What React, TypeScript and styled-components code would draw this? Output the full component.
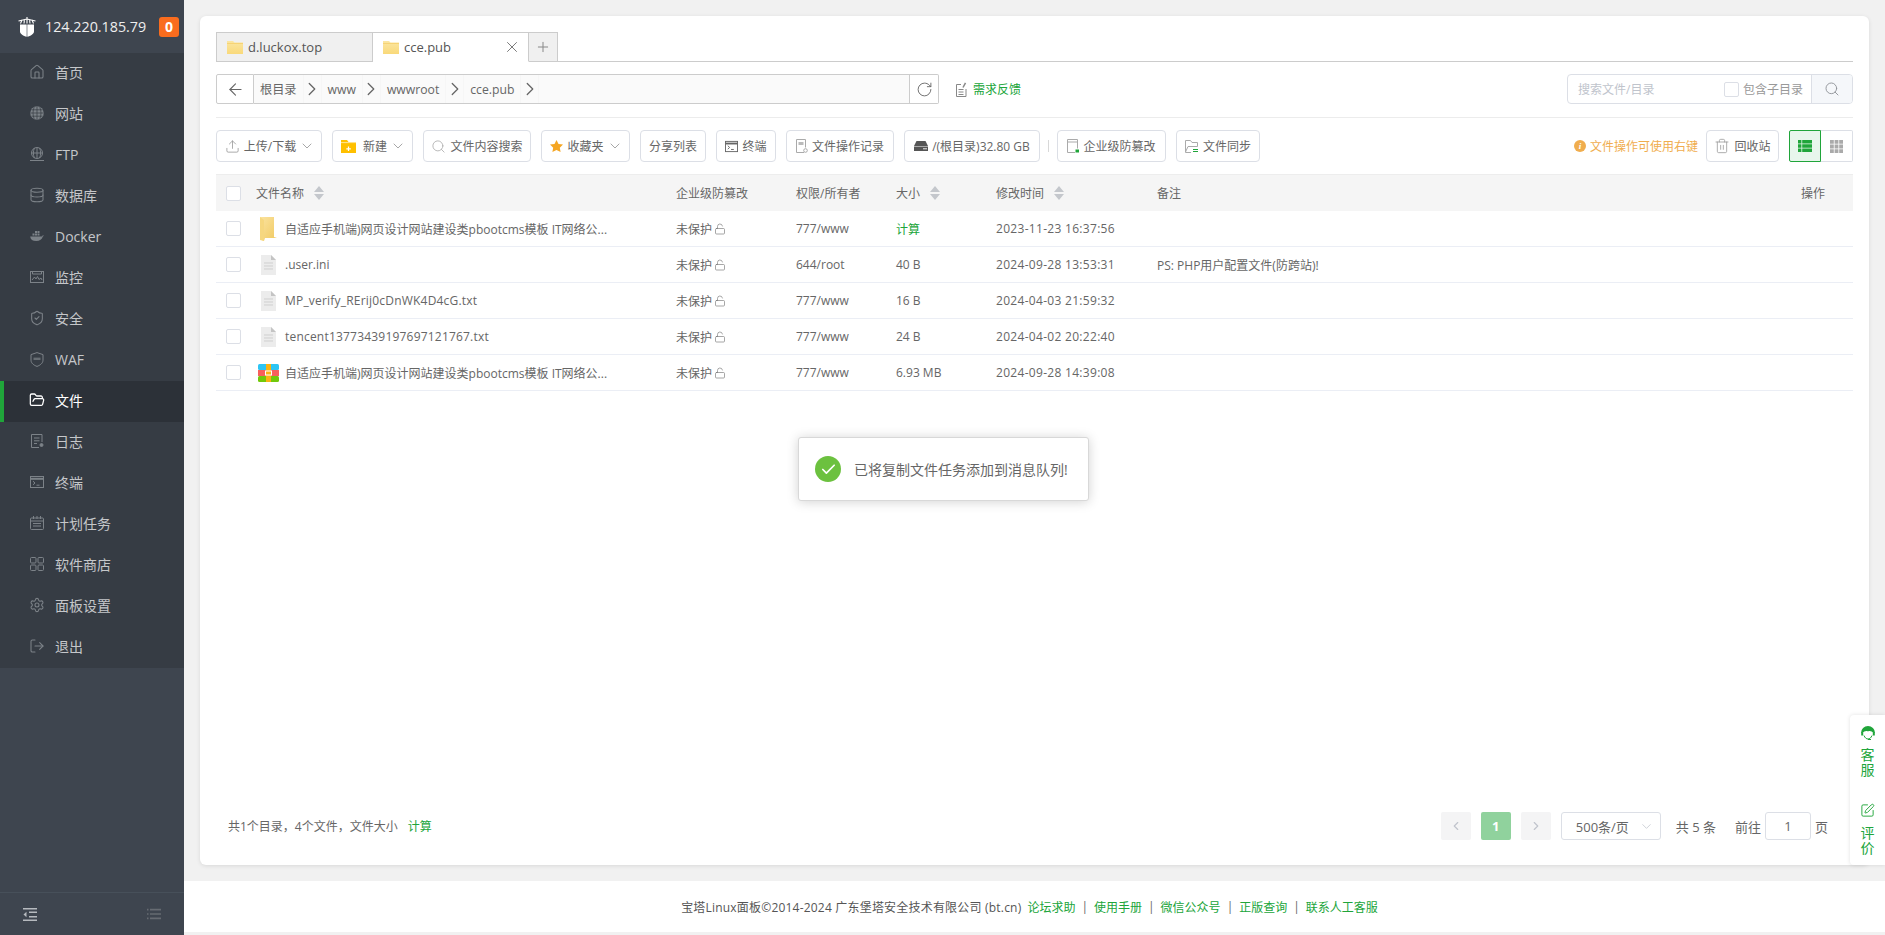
import React from "react";
import styled, { createGlobalStyle } from "styled-components";
import {
  ArrowLeft,
  Check,
  ChevronDown,
  ChevronLeft,
  ChevronRight,
  Database,
  FolderOpen,
  House,
  LockOpen,
  LogOut,
  Plus,
  RotateCw,
  Search,
  Settings,
  ShieldCheck,
  SquarePen,
  Trash2,
  Upload,
  X,
} from "lucide-react";

const GREEN = "#20a53a";
const FONT = `"Open Sans", "Noto Sans CJK SC", sans-serif`;

const GlobalStyle = createGlobalStyle`
  html, body { margin: 0; padding: 0; height: 100%; overflow: hidden; }
  body { font-family: ${FONT}; font-size: 12px; color: #666; background: #f1f1f1; }
  #root { height: 100%; }
  * { box-sizing: border-box; }
`;

const Page = styled.div`
  position: relative;
  display: flex;
  height: 935px;
  overflow: hidden;
`;

/* ---- sidebar ---- */
const Sidebar = styled.aside`
  width: 184px;
  flex: none;
  display: flex;
  flex-direction: column;
  background: #3e454f;
`;
const Brand = styled.div`
  height: 53px;
  display: flex;
  align-items: center;
  padding-left: 18px;
  color: #eee;
  font-size: 14.3px;
  background: #3e454f;
`;
const BrandIp = styled.span`
  margin-left: 9px;
  width: 114px;
`;
const Badge = styled.span`
  width: 20px;
  height: 20px;
  border-radius: 3px;
  background: #f96c1e;
  color: #fff;
  font-weight: 700;
  font-size: 14px;
  display: flex;
  align-items: center;
  justify-content: center;
`;
const Nav = styled.nav`
  background: #363c44;
`;
const NavItem = styled.a<{ $active?: boolean }>`
  height: 41px;
  display: flex;
  align-items: center;
  padding-left: ${(p) => (p.$active ? "26px" : "30px")};
  padding-bottom: 3px;
  gap: 11px;
  font-size: 14px;
  color: ${(p) => (p.$active ? "#fff" : "#c5c7ca")};
  background: ${(p) => (p.$active ? "#2c3138" : "transparent")};
  border-left: ${(p) => (p.$active ? `4px solid ${GREEN}` : "0")};
  svg {
    color: ${(p) => (p.$active ? "#fff" : "#7c8288")};
    flex: none;
  }
`;
const NavIconBox = styled.span`
  width: 14px;
  height: 16px;
  flex: none;
  display: flex;
  align-items: center;
  justify-content: center;
`;
const SideFoot = styled.div`
  margin-top: auto;
  height: 43px;
  border-top: 1px solid #47505a;
  display: flex;
  align-items: center;
  justify-content: space-between;
  padding: 0 23px;
`;

/* ---- main ---- */
const Main = styled.main`
  flex: 1;
  min-width: 0;
  display: flex;
  flex-direction: column;
`;
const Card = styled.section`
  flex: 1;
  margin: 16px 16px 16px;
  padding: 16px 16px 25px;
  background: #fff;
  border-radius: 6px;
  box-shadow: 0 1px 4px rgba(0, 0, 0, 0.1);
  display: flex;
  flex-direction: column;
  min-height: 0;
`;
const TabBar = styled.div`
  height: 30px;
  flex: none;
  display: flex;
  border-bottom: 1px solid #ccc;
`;
const Tab = styled.div<{ $active?: boolean }>`
  width: ${(p) => (p.$active ? "156px" : "157px")};
  height: 30px;
  display: flex;
  align-items: center;
  gap: 5px;
  padding: 0 10px;
  font-size: 13px;
  color: #555;
  border: 1px solid #ccc;
  border-left-width: ${(p) => (p.$active ? 0 : "1px")};
  border-bottom-color: ${(p) => (p.$active ? "#fff" : "#ccc")};
  background: ${(p) => (p.$active ? "#fff" : "#f0f0f0")};
`;
const TabClose = styled.span`
  margin-left: auto;
  margin-right: -3px;
  display: flex;
  color: #777;
`;
const TabAdd = styled.div`
  width: 29px;
  height: 30px;
  border: 1px solid #ccc;
  border-left: 0;
  background: #f0f0f0;
  color: #888;
  display: flex;
  align-items: center;
  justify-content: center;
`;
const PathRow = styled.div`
  margin-top: 12px;
  height: 30px;
  flex: none;
  display: flex;
  align-items: center;
`;
const BackBtn = styled.button`
  width: 38px;
  height: 30px;
  padding: 0;
  background: #fff;
  border: 1px solid #ccc;
  border-radius: 2px 0 0 2px;
  color: #666;
  display: flex;
  align-items: center;
  justify-content: center;
`;
const PathBox = styled.div`
  width: 656px;
  height: 30px;
  display: flex;
  background: #fafafa;
  border: 1px solid #ccc;
  border-left: 0;
`;
const Crumb = styled.span`
  padding: 0 6px;
  display: flex;
  align-items: center;
  font-size: 12.2px;
  color: #666;
  border-right: 1px solid #f6f6f6;
`;
const CrumbArrow = styled.span`
  width: 18px;
  display: flex;
  align-items: center;
  justify-content: center;
  color: #666;
  border-right: 1px solid #f6f6f6;
  svg {
    flex: none;
  }
`;
const RefreshBtn = styled.button`
  width: 29px;
  height: 30px;
  padding: 0;
  background: #fff;
  border: 1px solid #ccc;
  border-left: 0;
  border-radius: 0 2px 2px 0;
  color: #666;
  display: flex;
  align-items: center;
  justify-content: center;
`;
const Feedback = styled.span`
  margin-left: 17px;
  display: flex;
  align-items: center;
  gap: 6px;
  color: ${GREEN};
  font-size: 12px;
  svg {
    color: #888;
  }
`;
const SearchBox = styled.div`
  margin-left: auto;
  width: 286px;
  height: 30px;
  display: flex;
  border: 1px solid #dcdfe6;
  border-radius: 4px;
  overflow: hidden;
`;
const SearchText = styled.span`
  flex: 1;
  display: flex;
  align-items: center;
  padding-left: 10px;
  color: #c0c4cc;
`;
const SubCheck = styled.span`
  display: flex;
  align-items: center;
  gap: 4px;
  padding-right: 8px;
  color: #999;
`;
const SearchBtn = styled.span`
  width: 41px;
  background: #f5f7fa;
  border-left: 1px solid #dcdfe6;
  color: #909399;
  display: flex;
  align-items: center;
  justify-content: center;
`;
const Divider = styled.div`
  margin-top: 13px;
  height: 1px;
  flex: none;
  background: #ececec;
`;
const Toolbar = styled.div`
  margin-top: 12px;
  height: 32px;
  flex: none;
  display: flex;
  align-items: center;
  gap: 10px;
`;
const ToolBtn = styled.button<{ $width: number }>`
  width: ${(p) => p.$width}px;
  height: 32px;
  padding: 0;
  display: flex;
  align-items: center;
  justify-content: center;
  gap: 4px;
  font-family: ${FONT};
  font-size: 12px;
  color: #666;
  background: #fff;
  border: 1px solid #dcdfe6;
  border-radius: 4px;
  white-space: nowrap;
  svg {
    flex: none;
  }
`;
const Caret = styled(ChevronDown)`
  margin: 0 -2px 0 -1px;
  color: #999;
`;
const ToolSep = styled.span`
  width: 1px;
  height: 12px;
  margin: 0 -2px;
  background: #d8d8d8;
`;
const ToolHint = styled.span`
  margin-left: auto;
  margin-right: -2px;
  display: flex;
  align-items: center;
  gap: 4px;
  color: #f0ad4e;
`;
const HintDot = styled.i`
  width: 12px;
  height: 12px;
  border-radius: 50%;
  background: #f0ad4e;
  color: #fff;
  font-size: 9px;
  font-weight: 700;
  line-height: 12px;
  text-align: center;
  font-family: "Liberation Serif", serif;
`;
const ViewGroup = styled.div`
  display: flex;
`;
const ViewBtn = styled.span<{ $active?: boolean }>`
  width: 32px;
  height: 32px;
  display: flex;
  align-items: center;
  justify-content: center;
  border: 1px solid ${(p) => (p.$active ? GREEN : "#dcdfe6")};
  border-left-width: ${(p) => (p.$active ? "1px" : 0)};
  border-radius: ${(p) => (p.$active ? "2px 0 0 2px" : "0 2px 2px 0")};
  background: ${(p) => (p.$active ? "#e8f6ec" : "#fff")};
  color: ${(p) => (p.$active ? GREEN : "#aaa")};
`;

/* ---- table ---- */
const COLUMNS = "40px 420px 120px 100px 100px 161px 1fr 52px";
const Table = styled.div`
  margin-top: 12px;
  flex: 1;
  min-height: 0;
`;
const HeadRow = styled.div`
  height: 37px;
  display: grid;
  grid-template-columns: ${COLUMNS};
  align-items: center;
  background: #f5f5f5;
  border-top: 1px solid #ededed;
`;
const FileRow = styled.div`
  height: 36px;
  display: grid;
  grid-template-columns: ${COLUMNS};
  align-items: center;
  border-bottom: 1px solid #ebeef5;
`;
const Cell = styled.span<{ $green?: boolean }>`
  display: flex;
  align-items: center;
  gap: 2px;
  white-space: nowrap;
  color: ${(p) => (p.$green ? GREEN : "#666")};
`;
const TimeCell = styled(Cell)`
  letter-spacing: 0.3px;
`;
const OpCell = styled(Cell)`
  justify-content: flex-end;
  padding-right: 28px;
  grid-column: -2 / -1;
`;
const SortMark = styled.span`
  margin-left: 8px;
  display: flex;
`;
const CheckCell = styled.span`
  padding-left: 10px;
  display: flex;
`;
const CheckBox = styled.span`
  width: 15px;
  height: 15px;
  display: block;
  background: #fff;
  border: 1px solid #dcdfe6;
  border-radius: 2px;
  flex: none;
`;
const NameCell = styled.span<{ $spaced?: boolean }>`
  display: flex;
  align-items: center;
  white-space: nowrap;
  letter-spacing: ${(p) => (p.$spaced ? "0.2px" : "0")};
`;
const FileIconBox = styled.span`
  width: 21px;
  margin: 0 6px 0 2px;
  display: flex;
  justify-content: center;
  flex: none;
`;
const TableFoot = styled.div`
  height: 28px;
  flex: none;
  display: flex;
  align-items: center;
  justify-content: space-between;
`;
const Summary = styled.span`
  padding-left: 12px;
  display: flex;
  gap: 10px;
`;
const GreenText = styled.span`
  color: ${GREEN};
`;
const Pager = styled.div`
  display: flex;
  align-items: center;
  padding-right: 25px;
`;
const PageBtn = styled.span<{ $current?: boolean }>`
  width: 30px;
  height: 28px;
  margin-right: 10px;
  display: flex;
  align-items: center;
  justify-content: center;
  border-radius: 2px;
  font-size: 13px;
  font-weight: 700;
  color: ${(p) => (p.$current ? "#fff" : "#c0c4cc")};
  background: ${(p) => (p.$current ? "#90d29d" : "#f4f4f5")};
`;
const PageSelect = styled.span`
  width: 100px;
  height: 28px;
  padding: 0 6px 0 14px;
  display: flex;
  align-items: center;
  justify-content: space-between;
  font-size: 13px;
  color: #666;
  border: 1px solid #dcdfe6;
  border-radius: 3px;
  svg {
    color: #c0c4cc;
  }
`;
const PageText = styled.span<{ $left: number }>`
  margin-left: ${(p) => p.$left}px;
  font-size: 13px;
  color: #666;
`;
const PageInput = styled.span`
  width: 46px;
  height: 28px;
  margin: 0 4px;
  display: flex;
  align-items: center;
  justify-content: center;
  font-size: 13px;
  border: 1px solid #dcdfe6;
  border-radius: 3px;
`;

/* ---- footer ---- */
const Footer = styled.footer`
  height: 51px;
  margin-bottom: 3px;
  padding-right: 10px;
  flex: none;
  background: #fff;
  display: flex;
  align-items: center;
  justify-content: center;
  gap: 6px;
  color: #555;
`;
const Copyright = styled.span`
  letter-spacing: 0.2px;
`;
const FooterSep = styled.span`
  color: #666;
`;

/* ---- overlays ---- */
const Toast = styled.div`
  position: absolute;
  left: 798px;
  top: 437px;
  width: 291px;
  height: 64px;
  display: flex;
  align-items: center;
  gap: 13px;
  padding-left: 16px;
  background: #fff;
  border-radius: 3px;
  border: 1px solid #d8d8d8;
  box-shadow: 0 1px 12px rgba(0, 0, 0, 0.18);
  font-size: 14px;
  color: #666;
  white-space: nowrap;
`;
const ToastIcon = styled.span`
  width: 26px;
  height: 26px;
  border-radius: 50%;
  background: #6cc13f;
  color: #fff;
  display: flex;
  align-items: center;
  justify-content: center;
`;
const SideTools = styled.div`
  position: absolute;
  right: 0;
  top: 715px;
  width: 35px;
  height: 150px;
  padding-top: 11px;
  background: #fff;
  border-radius: 4px 0 0 4px;
  box-shadow: 0 0 4px rgba(0, 0, 0, 0.12);
  display: flex;
  flex-direction: column;
  align-items: center;
  gap: 26px;
  color: ${GREEN};
  font-size: 14px;
  line-height: 15px;
`;
const SideTool = styled.div`
  width: 14px;
  display: flex;
  flex-direction: column;
  align-items: center;
  gap: 7px;
  text-align: center;
  svg {
    flex: none;
  }
`;

/* ---- drawn icons ---- */
const line = { fill: "none", stroke: "currentColor", strokeWidth: 1 };

const LogoIcon = () => (
  <svg width="18" height="20" viewBox="0 0 18 20">
    <path d="M2 7.500h6.700V19.800C5.500 19 2 17 2 14.500zM9.300 7.500H16v7c0 2.500-3.500 4.500-6.700 5.300z" fill="#fff" />
    <path d="M9 0v6.500M.5 4l8.500-2 8.500 2M2.500 6.500L4 3M15.500 6.500L14 3M6 6.500l.5-4M12 6.500l-.5-4" stroke="#fff" strokeWidth="1.100" fill="none" />
  </svg>
);
const GlobeFill = () => (
  <svg width="14" height="14" viewBox="0 0 14 14">
    <circle cx="7" cy="7" r="6.800" fill="currentColor" />
    <path d="M7 .5v13M.5 7h13M1.500 3.800h11M1.500 10.200h11M4.200 1.200c-1.600 3.600-1.600 8 0 11.600M9.800 1.200c1.600 3.600 1.600 8 0 11.600" stroke="#363c44" strokeWidth=".7" fill="none" />
  </svg>
);
const FtpIcon = () => (
  <svg width="14" height="14" viewBox="0 0 14 14" {...line}>
    <circle cx="7" cy="6" r="5.500" />
    <path d="M7 .5v11M1.500 6h11M4.400 1c-1.300 3-1.300 7 0 10M9.600 1c1.300 3 1.300 7 0 10M0 13.500h14" />
  </svg>
);
const DockerIcon = () => (
  <svg width="14" height="14" viewBox="0 0 14 14">
    <path d="M.2 7.500h11c.7 0 1.100-.5 1.400-1 .4.1 1 0 1.400-.3-.1.6-.6 1-1.200 1.200-.8 2.800-3 4.600-6.500 4.600C2.600 12 .4 10.500.2 7.500z" fill="currentColor" />
    <path d="M2.500 4.500h2v2h-2zM5 4.500h2v2H5zM7.500 4.500h2v2h-2zM5 2h2v2H5zM7.500 2h2v2h-2z" fill="currentColor" />
  </svg>
);
const MonitorIcon = () => (
  <svg width="14" height="14" viewBox="0 0 14 14" {...line}>
    <rect x=".5" y="1.500" width="13" height="11" />
    <path d="M2.500 1.500v2.500h9V1.500M2 10l2.500-3 1.500 2 1.500-2.500 1.500 3L11 8l1 2" />
  </svg>
);
const WafIcon = () => (
  <svg width="14" height="15" viewBox="0 0 14 15" {...line}>
    <path d="M7 .6l6 2v5.600c0 3-3 5.200-6 6.200-3-1-6-3.200-6-6.200V2.600z" />
    <path d="M3.500 6.800h7" strokeWidth="2.400" opacity=".7" />
  </svg>
);
const LogIcon = () => (
  <svg width="14" height="14" viewBox="0 0 14 14" {...line}>
    <path d="M12 8V.5H1.500v13H9M4 4h5.500M4 6.800h5.500M4 9.500h3" />
    <circle cx="11.500" cy="11" r="1.500" fill="currentColor" />
  </svg>
);
const TermIcon = ({ size = 14 }: { size?: number }) => (
  <svg width={size} height={size} viewBox="0 0 14 14" {...line}>
    <rect x=".5" y="1.500" width="13" height="11" />
    <path d="M.5 3.800h13" strokeWidth="2" />
    <path d="M3 6.200l2 1.800-2 1.800M6.500 10.200h3" />
  </svg>
);
const CalendarIcon = () => (
  <svg width="14" height="14" viewBox="0 0 14 14" {...line}>
    <rect x=".5" y="2" width="13" height="11.500" rx="1" />
    <path d="M3.500 0v3M7 0v3M10.500 0v3M.5 5h13M3 7.500h8M3 10h8" />
  </svg>
);
const AppsIcon = () => (
  <svg width="14" height="14" viewBox="0 0 14 14" {...line}>
    <rect x=".5" y=".5" width="5.500" height="5.500" rx="1" />
    <rect x="8" y=".5" width="5.500" height="5.500" rx="1" />
    <rect x=".5" y="8" width="5.500" height="5.500" rx="1" />
    <rect x="8" y="8" width="5.500" height="5.500" rx="1" />
  </svg>
);
const TabFolder = () => (
  <svg width="16" height="14" viewBox="0 0 16 14">
    <defs>
      <linearGradient id="tf" x1="0" y1="0" x2="0" y2="1">
        <stop offset="0" stopColor="#fbe6a2" />
        <stop offset="1" stopColor="#f9d97a" />
      </linearGradient>
    </defs>
    <path d="M0 1h6l1.500 1.500H16V14H0z" fill="url(#tf)" />
    <path d="M0 3.500h16" stroke="#f3c85c" strokeWidth=".6" />
  </svg>
);
const RowFolder = () => (
  <svg width="17" height="24" viewBox="0 0 17 24">
    <defs>
      <linearGradient id="rf" x1="0" y1="0" x2="1" y2="1">
        <stop offset="0" stopColor="#fbe3a0" />
        <stop offset="1" stopColor="#f0c95f" />
      </linearGradient>
    </defs>
    <path d="M0 0h14v20l3 1H5l-1 3-4-1z" fill="url(#rf)" />
    <path d="M0 0l4 3v21l-4-2z" fill="#f6d77f" />
  </svg>
);
const DocIcon = () => (
  <svg width="15" height="20" viewBox="0 0 15 20">
    <path d="M0 0h10l5 5v15H0z" fill="#ececec" />
    <path d="M10 0l5 5h-5z" fill="#c4c4c4" />
    <path d="M3 8h9M3 11h9M3 14h9" stroke="#cfcfcf" strokeWidth="1" />
  </svg>
);
const RarIcon = () => (
  <svg width="21" height="18" viewBox="0 0 21 18">
    <rect width="21" height="6" rx="1.500" fill="#2dc5f4" />
    <rect y="6" width="21" height="6" fill="#f8605c" />
    <rect y="12" width="21" height="6" rx="1.500" fill="#72c90a" />
    <rect x="8" width="5" height="18" fill="#fbb313" />
    <rect x="7.500" y="7" width="6" height="4" fill="none" stroke="#fff" strokeWidth="1" />
  </svg>
);
const NewFolderIcon = () => (
  <svg width="15" height="13" viewBox="0 0 15 13">
    <path d="M0 0h6l1.500 2H15v11H0z" fill="#ffc000" />
    <path d="M0 2.600h15" stroke="#fff" strokeWidth=".6" />
    <path d="M7.500 6.500v4.500M5.300 8.800h4.500" stroke="#fff" strokeWidth="1.200" />
  </svg>
);
const StarIcon = () => (
  <svg width="13" height="12" viewBox="0 0 13 12">
    <path d="M6.500 0l2 4 4.500.6-3.200 3.100.8 4.300-4.100-2.100L2.400 12l.8-4.300L0 4.600 4.500 4z" fill="#f5a623" />
  </svg>
);
const RecordIcon = () => (
  <svg width="12" height="14" viewBox="0 0 12 14" fill="none" stroke="#aaa">
    <path d="M8 13.500H.5V.5h9v8" />
    <path d="M2.500 3h5v3h-5z" fill="#bbb" stroke="none" />
    <circle cx="9.500" cy="11.500" r="1.800" />
  </svg>
);
const DiskIcon = () => (
  <svg width="14" height="10" viewBox="0 0 14 10">
    <path d="M2.500 0h9L14 5H0z" fill="#555" />
    <path d="M0 5.500h14V10H0z" fill="#555" />
    <circle cx="10" cy="7.800" r=".8" fill="#fff" />
    <circle cx="12" cy="7.800" r=".8" fill="#fff" />
  </svg>
);
const GuardIcon = () => (
  <svg width="12" height="14" viewBox="0 0 12 14" fill="none" stroke="#aaa">
    <path d="M8 13.500H.5V.5h10v9" />
    <path d="M.5 3h10" />
    <rect x="8.500" y="10.500" width="3.500" height="3" fill={GREEN} stroke="none" />
  </svg>
);
const SyncIcon = () => (
  <svg width="14" height="13" viewBox="0 0 14 13" fill="none" stroke="#aaa">
    <path d="M6 12.500H.5V.5h5l1.500 2h5.500v4H3L.5 12" />
    <path d="M8 9.500h5M8 11.500h5" stroke={GREEN} />
  </svg>
);
const NoteIcon = () => (
  <svg width="11" height="15" viewBox="0 0 11 15" fill="none" stroke="currentColor">
    <path d="M10 7v7.500H.5V2.500H5M2.500 7.500h5M2.500 10h5M2.500 12.500h5" />
    <path d="M7 5.500L9.500 .8" strokeWidth="1.500" />
  </svg>
);
const ListIcon = () => (
  <svg width="14" height="12" viewBox="0 0 14 12" fill="currentColor">
    <path d="M0 0h3.400v3.400H0zM4.200 0H14v3.400H4.200zM0 4.300h3.400v3.400H0zM4.200 4.300H14v3.400H4.200zM0 8.600h3.400V12H0zM4.200 8.600H14V12H4.200z" />
  </svg>
);
const GridIcon = () => (
  <svg width="13" height="13" viewBox="0 0 13 13" fill="currentColor">
    <path d="M0 0h3.800v3.800H0zM4.600 0h3.800v3.800H4.600zM9.200 0H13v3.800H9.200zM0 4.600h3.800v3.800H0zM4.600 4.600h3.800v3.800H4.600zM9.200 4.600H13v3.800H9.200zM0 9.200h3.800V13H0zM4.600 9.200h3.800V13H4.600zM9.200 9.200H13V13H9.200z" />
  </svg>
);
const SortIcon = () => (
  <svg width="10" height="14" viewBox="0 0 10 14" fill="#c4c7cc">
    <path d="M5 0l5 6H0zM5 14L0 8h10z" />
  </svg>
);
const AgentIcon = () => (
  <svg width="14" height="14" viewBox="0 0 14 14">
    <path d="M7 0a7 7 0 0 1 7 7h-1.500C11 5.500 9 4.500 7 5.500 5 4.500 3 5.500 1.500 7H0a7 7 0 0 1 7-7z" fill="currentColor" />
    <path d="M.2 6.500h2v3h-2zM11.800 6.500h2v3h-2z" fill="currentColor" />
    <path d="M3 9.500c1 2.500 2.500 3.500 4 3.500s3-1 4-3.500M7 13.500h3" stroke="currentColor" fill="none" />
  </svg>
);
const FoldIcon = () => (
  <svg width="14" height="13" viewBox="0 0 14 13" fill="#b6babf">
    <path d="M0 0h14v1.500H0zM0 11.500h14V13H0zM6 3.500h8V5H6zM6 8h8v1.500H6z" />
    <path d="M3.500 3.700v5.600L.5 6.500z" />
  </svg>
);
const ListDimIcon = () => (
  <svg width="14" height="12" viewBox="0 0 14 12" fill="#666b72">
    <path d="M0 .8h1.500v1.600H0zM3 .8h11v1.600H3zM0 5.200h1.500v1.600H0zM3 5.200h11v1.600H3zM0 9.600h1.500v1.600H0zM3 9.600h11v1.600H3z" />
  </svg>
);

const nav: { label: string; icon: React.ReactNode; active?: boolean }[] = [
  { label: "首页", icon: <House size={16} strokeWidth={1.6} /> },
  { label: "网站", icon: <GlobeFill /> },
  { label: "FTP", icon: <FtpIcon /> },
  { label: "数据库", icon: <Database size={16} strokeWidth={1.6} /> },
  { label: "Docker", icon: <DockerIcon /> },
  { label: "监控", icon: <MonitorIcon /> },
  { label: "安全", icon: <ShieldCheck size={16} strokeWidth={1.6} /> },
  { label: "WAF", icon: <WafIcon /> },
  { label: "文件", icon: <FolderOpen size={16} strokeWidth={1.9} />, active: true },
  { label: "日志", icon: <LogIcon /> },
  { label: "终端", icon: <TermIcon /> },
  { label: "计划任务", icon: <CalendarIcon /> },
  { label: "软件商店", icon: <AppsIcon /> },
  { label: "面板设置", icon: <Settings size={16} strokeWidth={1.6} /> },
  { label: "退出", icon: <LogOut size={16} strokeWidth={1.6} /> },
];

const crumbs = ["根目录", "www", "wwwroot", "cce.pub"];

const LONG_NAME = "自适应手机端)网页设计网站建设类pbootcms模板 IT网络公...";

const files: {
  name: string;
  icon: React.ReactNode;
  perm: string;
  size: string;
  time: string;
  note?: string;
  calc?: boolean;
}[] = [
  { name: LONG_NAME, icon: <RowFolder />, perm: "777/www", size: "计算", time: "2023-11-23 16:37:56", calc: true },
  { name: ".user.ini", icon: <DocIcon />, perm: "644/root", size: "40 B", time: "2024-09-28 13:53:31", note: "PS: PHP用户配置文件(防跨站)!" },
  { name: "MP_verify_RErij0cDnWK4D4cG.txt", icon: <DocIcon />, perm: "777/www", size: "16 B", time: "2024-04-03 21:59:32" },
  { name: "tencent13773439197697121767.txt", icon: <DocIcon />, perm: "777/www", size: "24 B", time: "2024-04-02 20:22:40" },
  { name: LONG_NAME, icon: <RarIcon />, perm: "777/www", size: "6.93 MB", time: "2024-09-28 14:39:08" },
];

const footerLinks = ["论坛求助", "使用手册", "微信公众号", "正版查询", "联系人工客服"];

export default function App() {
  return (
    <Page>
      <GlobalStyle />
      <Sidebar>
        <Brand>
          <LogoIcon />
          <BrandIp>124.220.185.79</BrandIp>
          <Badge>0</Badge>
        </Brand>
        <Nav>
          {nav.map((item) => (
            <NavItem key={item.label} $active={item.active}>
              <NavIconBox>{item.icon}</NavIconBox>
              {item.label}
            </NavItem>
          ))}
        </Nav>
        <SideFoot>
          <FoldIcon />
          <ListDimIcon />
        </SideFoot>
      </Sidebar>

      <Main>
        <Card>
          <TabBar>
            <Tab>
              <TabFolder />
              d.luckox.top
            </Tab>
            <Tab $active>
              <TabFolder />
              cce.pub
              <TabClose>
                <X size={18} strokeWidth={1.3} />
              </TabClose>
            </Tab>
            <TabAdd>
              <Plus size={16} strokeWidth={1.5} />
            </TabAdd>
          </TabBar>

          <PathRow>
            <BackBtn>
              <ArrowLeft size={19} strokeWidth={1.4} />
            </BackBtn>
            <PathBox>
              {crumbs.map((c) => (
                <React.Fragment key={c}>
                  <Crumb>{c}</Crumb>
                  <CrumbArrow>
                    <ChevronRight size={22} strokeWidth={1.4} />
                  </CrumbArrow>
                </React.Fragment>
              ))}
            </PathBox>
            <RefreshBtn>
              <RotateCw size={17} strokeWidth={1.3} />
            </RefreshBtn>
            <Feedback>
              <NoteIcon />
              需求反馈
            </Feedback>
            <SearchBox>
              <SearchText>搜索文件/目录</SearchText>
              <SubCheck>
                <CheckBox />
                包含子目录
              </SubCheck>
              <SearchBtn>
                <Search size={16} strokeWidth={1.4} />
              </SearchBtn>
            </SearchBox>
          </PathRow>

          <Divider />

          <Toolbar>
            <ToolBtn $width={106}>
              <Upload size={15} strokeWidth={1.3} color="#999" />
              上传/下载
              <Caret size={16} strokeWidth={1.3} />
            </ToolBtn>
            <ToolBtn $width={81}>
              <NewFolderIcon />
              &nbsp;新建
              <Caret size={16} strokeWidth={1.3} />
            </ToolBtn>
            <ToolBtn $width={108}>
              <Search size={15} strokeWidth={1.3} color="#aaa" />
              文件内容搜索
            </ToolBtn>
            <ToolBtn $width={89}>
              <StarIcon />
              收藏夹
              <Caret size={16} strokeWidth={1.3} />
            </ToolBtn>
            <ToolBtn $width={66}>分享列表</ToolBtn>
            <ToolBtn $width={60}>
              <TermIcon size={13} />
              终端
            </ToolBtn>
            <ToolBtn $width={108}>
              <RecordIcon />
              文件操作记录
            </ToolBtn>
            <ToolBtn $width={136}>
              <DiskIcon />
              /(根目录)32.80 GB
            </ToolBtn>
            <ToolSep />
            <ToolBtn $width={109}>
              <GuardIcon />
              企业级防篡改
            </ToolBtn>
            <ToolBtn $width={84}>
              <SyncIcon />
              文件同步
            </ToolBtn>
            <ToolHint>
              <HintDot>i</HintDot>
              文件操作可使用右键
            </ToolHint>
            <ToolBtn $width={73}>
              <Trash2 size={16} strokeWidth={1.2} color="#999" />
              回收站
            </ToolBtn>
            <ViewGroup>
              <ViewBtn $active>
                <ListIcon />
              </ViewBtn>
              <ViewBtn>
                <GridIcon />
              </ViewBtn>
            </ViewGroup>
          </Toolbar>

          <Table>
            <HeadRow>
              <CheckCell>
                <CheckBox />
              </CheckCell>
              <Cell>
                文件名称
                <SortMark>
                  <SortIcon />
                </SortMark>
              </Cell>
              <Cell>企业级防篡改</Cell>
              <Cell>权限/所有者</Cell>
              <Cell>
                大小
                <SortMark>
                  <SortIcon />
                </SortMark>
              </Cell>
              <Cell>
                修改时间
                <SortMark>
                  <SortIcon />
                </SortMark>
              </Cell>
              <Cell>备注</Cell>
              <OpCell>操作</OpCell>
            </HeadRow>
            {files.map((f) => (
              <FileRow key={f.time}>
                <CheckCell>
                  <CheckBox />
                </CheckCell>
                <NameCell $spaced={f.name.endsWith(".txt")}>
                  <FileIconBox>{f.icon}</FileIconBox>
                  {f.name}
                </NameCell>
                <Cell>
                  未保护
                  <LockOpen size={12} strokeWidth={1.3} color="#777" />
                </Cell>
                <Cell>{f.perm}</Cell>
                <Cell $green={f.calc}>{f.size}</Cell>
                <TimeCell>{f.time}</TimeCell>
                <Cell>{f.note}</Cell>
              </FileRow>
            ))}
          </Table>

          <TableFoot>
            <Summary>
              共1个目录，4个文件，文件大小
              <GreenText>计算</GreenText>
            </Summary>
            <Pager>
              <PageBtn>
                <ChevronLeft size={14} />
              </PageBtn>
              <PageBtn $current>1</PageBtn>
              <PageBtn>
                <ChevronRight size={14} />
              </PageBtn>
              <PageSelect>
                500条/页
                <ChevronDown size={15} strokeWidth={1.2} />
              </PageSelect>
              <PageText $left={15}>共 5 条</PageText>
              <PageText $left={19}>前往</PageText>
              <PageInput>1</PageInput>
              <PageText $left={0}>页</PageText>
            </Pager>
          </TableFoot>
        </Card>

        <Footer>
          <Copyright>宝塔Linux面板©2014-2024 广东堡塔安全技术有限公司 (bt.cn)</Copyright>
          {footerLinks.map((l, i) => (
            <React.Fragment key={l}>
              {i > 0 && <FooterSep>|</FooterSep>}
              <GreenText>{l}</GreenText>
            </React.Fragment>
          ))}
        </Footer>
      </Main>

      <Toast>
        <ToastIcon>
          <Check size={17} strokeWidth={2.4} />
        </ToastIcon>
        已将复制文件任务添加到消息队列!
      </Toast>

      <SideTools>
        <SideTool>
          <AgentIcon />
          客服
        </SideTool>
        <SideTool>
          <SquarePen size={15} strokeWidth={1.5} />
          评价
        </SideTool>
      </SideTools>
    </Page>
  );
}
